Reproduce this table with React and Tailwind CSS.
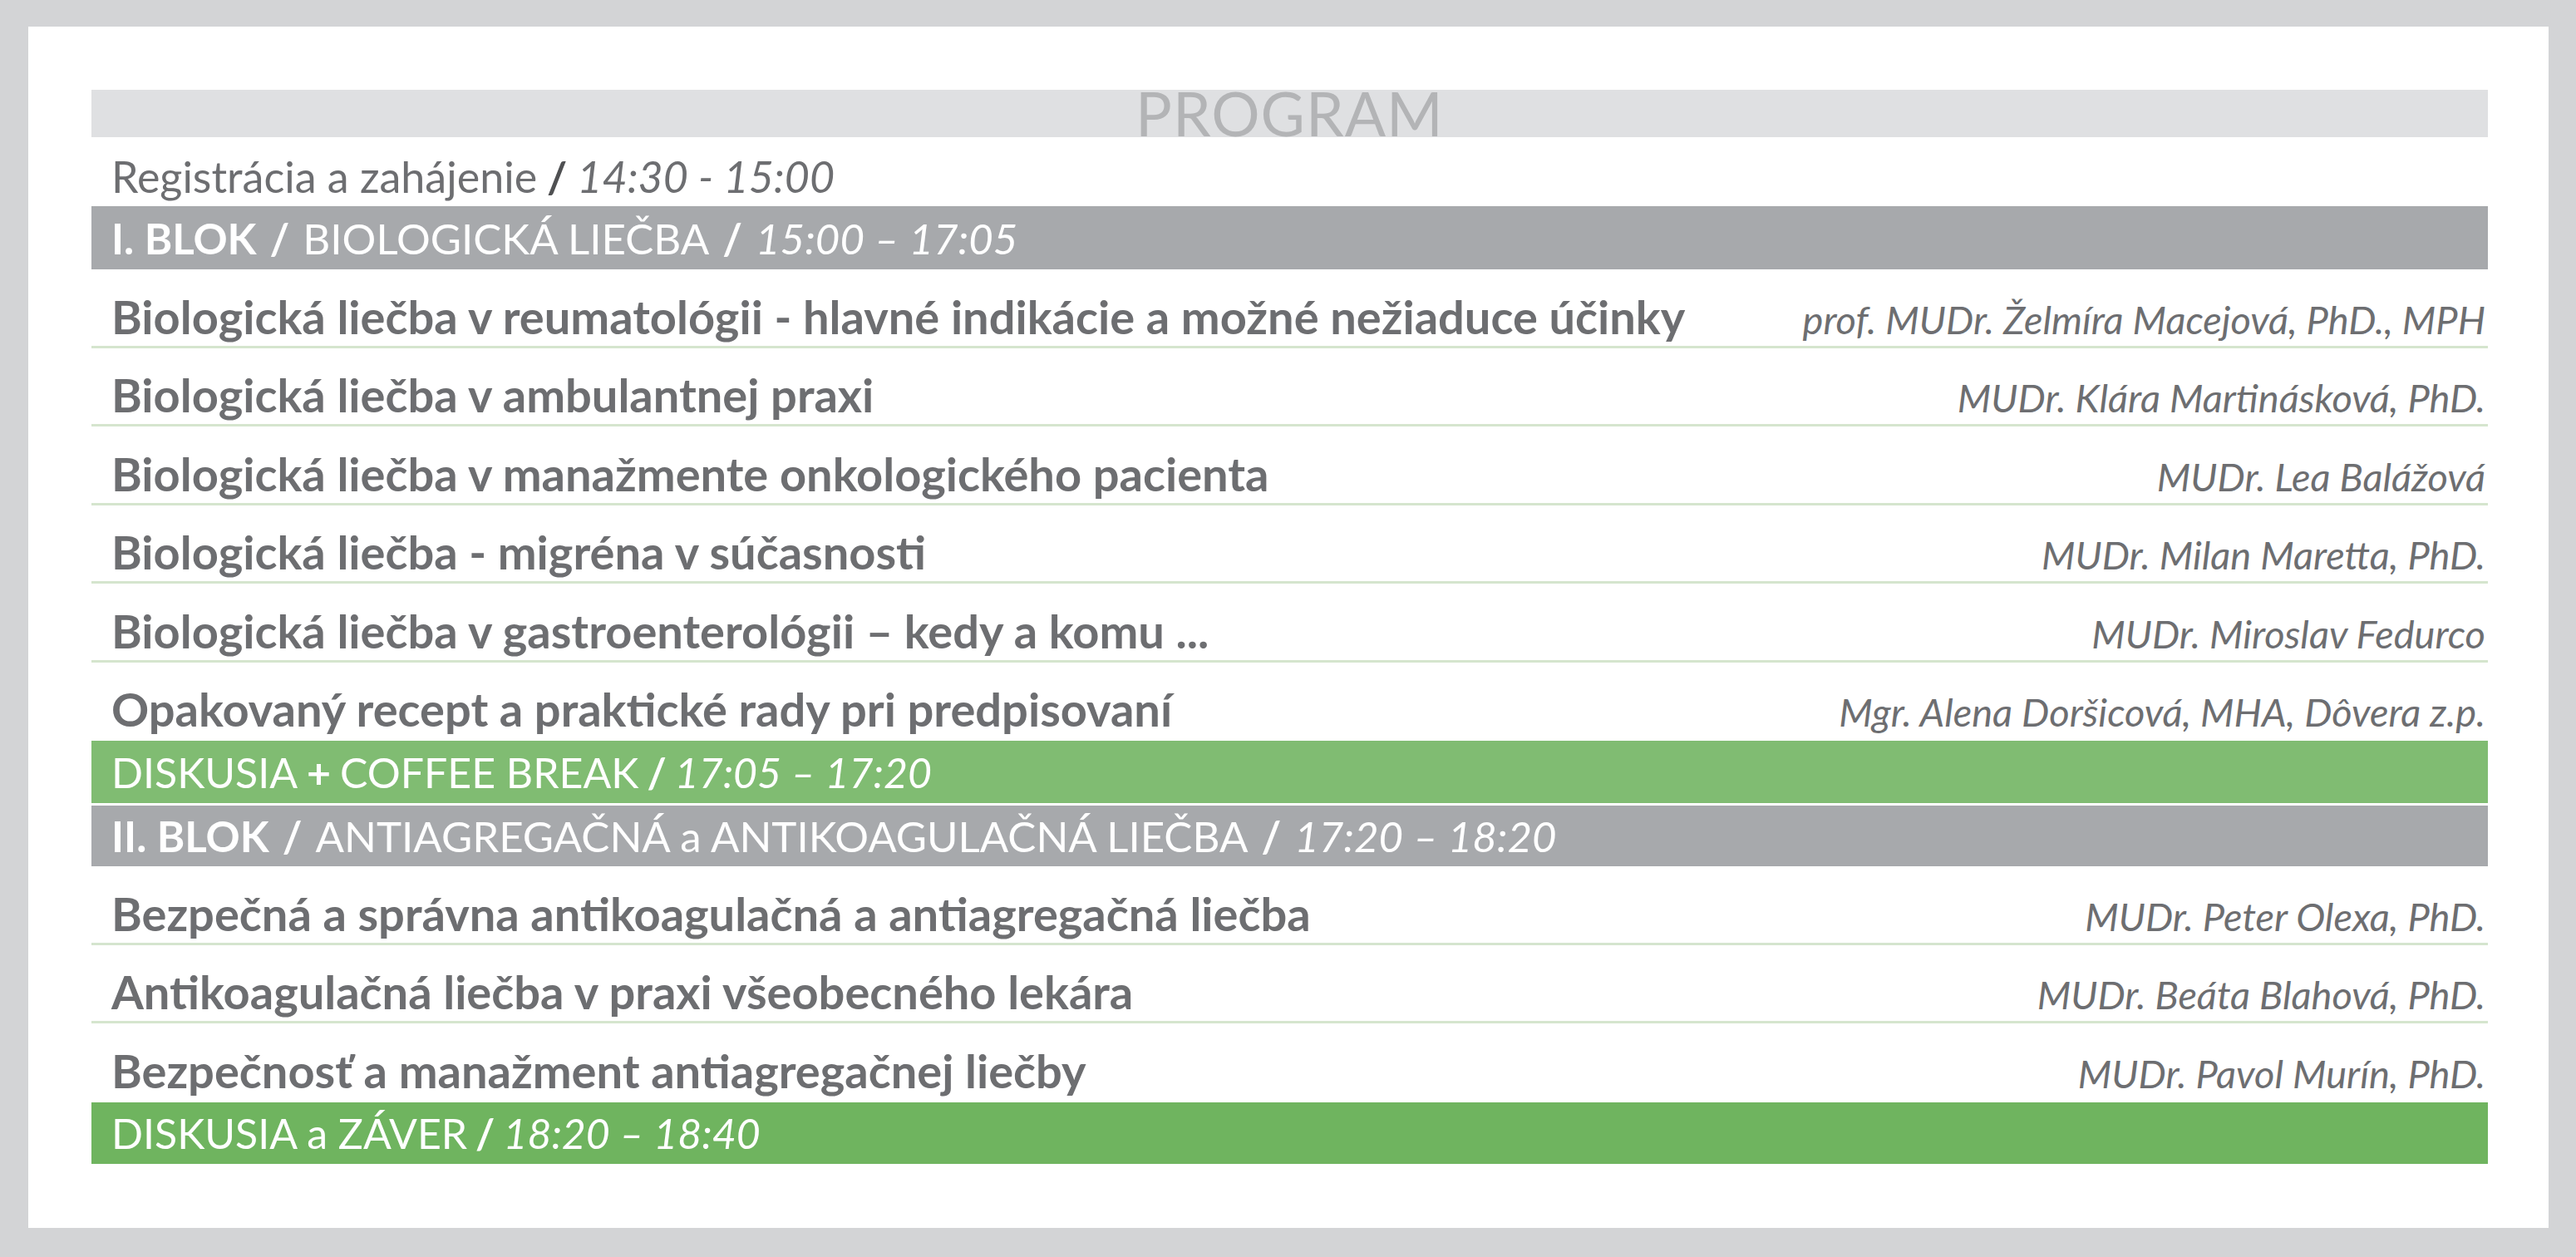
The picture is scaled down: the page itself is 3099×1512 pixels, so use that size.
import React from 'react';

// Program konferencie: bloky, prednášky, prestávky
const blok1 = [
  ['Biologická liečba v reumatológii - hlavné indikácie a možné nežiaduce účinky', 'prof. MUDr. Želmíra Macejová, PhD., MPH'],
  ['Biologická liečba v ambulantnej praxi', 'MUDr. Klára Martinásková, PhD.'],
  ['Biologická liečba v manažmente onkologického pacienta', 'MUDr. Lea Balážová'],
  ['Biologická liečba - migréna v súčasnosti', 'MUDr. Milan Maretta, PhD.'],
  ['Biologická liečba v gastroenterológii – kedy a komu ...', 'MUDr. Miroslav Fedurco'],
  ['Opakovaný recept a praktické rady pri predpisovaní', 'Mgr. Alena Doršicová, MHA, Dôvera z.p.'],
];

const blok2 = [
  ['Bezpečná a správna antikoagulačná a antiagregačná liečba', 'MUDr. Peter Olexa, PhD.'],
  ['Antikoagulačná liečba v praxi všeobecného lekára', 'MUDr. Beáta Blahová, PhD.'],
  ['Bezpečnosť a manažment antiagregačnej liečby', 'MUDr. Pavol Murín, PhD.'],
];

const Slash = ({ className = '' }) => (
  <span className={`font-bold ${className}`}>/</span>
);

const Talk = ({ title, speaker, last }) => (
  <div
    className={`h-[94.5px] flex items-end justify-between pl-[24px] pr-[3px] ${
      last ? 'pb-[10px]' : 'pb-[7px] border-b-[3px] border-[#d5e5ce]'
    }`}
  >
    <span className="text-[56px] leading-none font-bold text-[#6d6e71] whitespace-nowrap">{title}</span>
    <span className="text-[47px] leading-none italic text-[#6d6e71] whitespace-nowrap pb-[1px]">{speaker}</span>
  </div>
);

const Bar = ({ color, height, size, children }) => (
  <div className={`${color} ${height} ${size} flex items-center pl-[24px] text-white leading-none whitespace-nowrap`}>
    {children}
  </div>
);

export default function App() {
  return (
    <div
      className="w-full h-[1512px] bg-[#d3d4d6] pt-[32px] pl-[34px] pr-[33px] pb-[35px]"
      style={{ fontFamily: 'Lato, "Liberation Sans", sans-serif' }}
    >
      <div className="bg-white h-full pt-[76px] pl-[76px] pr-[73px]">
        {/* Hlavička */}
        <div className="h-[57px] bg-[#dfe0e2] flex items-center justify-center">
          <span className="text-[73px] leading-none text-[#b3b4b6] tracking-[1px]">PROGRAM</span>
        </div>

        {/* Registrácia */}
        <div className="h-[83px] flex items-end pb-[10px] pl-[24px] text-[52px] leading-none text-[#6d6e71] whitespace-nowrap">
          <span>Registrácia a zahájenie</span>
          <Slash className="text-[#4f5052] mx-[12px]" />
          <span className="italic">14:30 - 15:00</span>
        </div>

        {/* I. blok */}
        <Bar color="bg-[#a7a9ac]" height="h-[76px]" size="text-[51px]">
          <span className="font-bold">I. BLOK</span>
          <Slash className="mx-[16px]" />
          <span>BIOLOGICKÁ LIEČBA</span>
          <Slash className="mx-[16px]" />
          <span className="italic">15:00 – 17:05</span>
        </Bar>
        {blok1.map(([t, s], i) => (
          <Talk key={t} title={t} speaker={s} last={i === blok1.length - 1} />
        ))}

        <div className="mb-[3px]">
          <Bar color="bg-[#80bc72]" height="h-[75px]" size="text-[50px]">
            <span>DISKUSIA</span>
            <span className="font-bold mx-[11px]">+</span>
            <span>COFFEE BREAK</span>
            <Slash className="mx-[10px]" />
            <span className="italic">17:05 – 17:20</span>
          </Bar>
        </div>

        {/* II. blok */}
        <Bar color="bg-[#a7a9ac]" height="h-[73px]" size="text-[51px]">
          <span className="font-bold">II. BLOK</span>
          <Slash className="mx-[16px]" />
          <span>ANTIAGREGAČNÁ a ANTIKOAGULAČNÁ LIEČBA</span>
          <Slash className="mx-[16px]" />
          <span className="italic">17:20 – 18:20</span>
        </Bar>
        {blok2.map(([t, s], i) => (
          <Talk key={t} title={t} speaker={s} last={i === blok2.length - 1} />
        ))}

        <Bar color="bg-[#6fb45f]" height="h-[74px]" size="text-[50px]">
          <span>DISKUSIA a ZÁVER</span>
          <Slash className="mx-[10px]" />
          <span className="italic">18:20 – 18:40</span>
        </Bar>
      </div>
    </div>
  );
}
